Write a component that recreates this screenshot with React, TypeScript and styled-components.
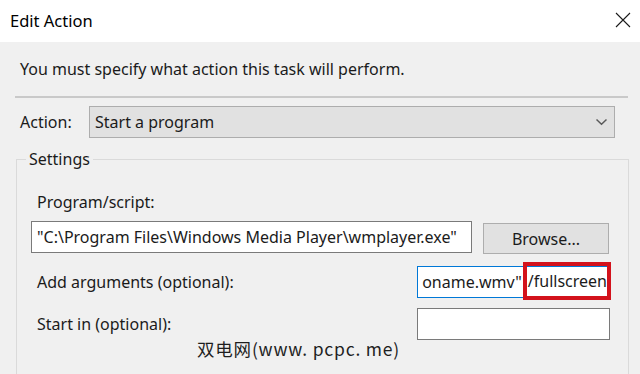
import * as React from "react";
import styled, { createGlobalStyle } from "styled-components";

const GlobalStyle = createGlobalStyle`
  html, body {
    margin: 0;
    padding: 0;
    background: #f0f0f0;
  }
  body {
    font-family: "Noto Sans", "Open Sans", sans-serif;
    color: #1b1b1b;
  }
`;

const Window = styled.div`
  position: relative;
  width: 640px;
  height: 374px;
  overflow: hidden;
  background: #f0f0f0;
  display: flex;
  flex-direction: column;
`;

const TitleBar = styled.div`
  height: 42px;
  flex: none;
  background: #ffffff;
  display: flex;
  align-items: center;
  justify-content: space-between;
  padding: 0 9px 0 10px;
  box-sizing: border-box;
`;

const Title = styled.div`
  font-size: 16.5px;
  color: #000;
  margin-top: -2px;
`;

const CloseButton = styled.div`
  width: 16px;
  height: 16px;
  margin-top: -3px;
  display: flex;
`;

const Body = styled.div`
  flex: 1;
  display: flex;
  flex-direction: column;
  padding: 0 11px 0 16px;
`;

const Intro = styled.div`
  height: 54px;
  display: flex;
  align-items: center;
  padding: 0 0 0 4px;
  font-size: 16px;
`;

const Separator = styled.div`
  height: 2px;
  margin: 0 1px 0 -1px;
  background: #c9c9c9;
`;

const ActionRow = styled.div`
  display: flex;
  align-items: center;
  margin-top: 8px;
  padding-left: 4px;
  padding-right: 14px;
  height: 32px;
`;

const ActionLabel = styled.div`
  width: 69px;
  font-size: 16px;
`;

const Select = styled.div`
  flex: 1;
  height: 32px;
  box-sizing: border-box;
  background: #e1e1e1;
  border: 1px solid #adadad;
  display: flex;
  align-items: center;
  justify-content: space-between;
  padding: 0 6px 0 5px;
  font-size: 16px;
`;

const Group = styled.fieldset`
  margin: 10px 0 0 0;
  padding: 21px 18px 0 20px;
  border: 1px solid #dadada;
  border-bottom: none;
  min-width: 0;
  flex: 1;
`;

const Legend = styled.legend`
  font-size: 16px;
  padding: 0 3px;
  margin-left: -11px;
  line-height: 22px;
`;

const FieldLabel = styled.div`
  font-size: 16px;
  line-height: 22px;
`;

const ProgramRow = styled.div`
  display: flex;
  align-items: flex-start;
  margin: 8px 0 0 -6px;
  gap: 11px;
`;

const TextBox = styled.div<{ $width?: number; $focused?: boolean }>`
  box-sizing: border-box;
  height: 32px;
  width: ${(p) => (p.$width ? `${p.$width}px` : "auto")};
  flex: ${(p) => (p.$width ? "none" : "1")};
  background: #ffffff;
  border: 1px solid ${(p) => (p.$focused ? "#0078d7" : "#7a7a7a")};
  display: flex;
  align-items: center;
  font-size: 16px;
  white-space: nowrap;
  padding: 0 3px 0 5px;
`;

const Button = styled.div`
  box-sizing: border-box;
  width: 126px;
  height: 31px;
  margin-top: 2px;
  background: #e1e1e1;
  border: 1px solid #adadad;
  display: flex;
  align-items: center;
  justify-content: center;
  font-size: 16px;
`;

const OptionRow = styled.div<{ $top: number }>`
  display: flex;
  align-items: center;
  justify-content: space-between;
  margin-top: ${(p) => p.$top}px;
`;

const ArgsBox = styled(TextBox)`
  padding: 0;
  justify-content: flex-end;
`;

const ArgsText = styled.div`
  flex: 1;
  display: flex;
  justify-content: flex-end;
  padding-right: 1px;
`;

const Highlight = styled.span`
  align-self: stretch;
  margin: -5px -2px -3px 0;
  border: 4px solid #d3121c;
  display: flex;
  align-items: center;
  padding: 0 0 0 1px;
`;

const Watermark = styled.div`
  position: absolute;
  left: 197px;
  top: 336px;
  font-family: "Noto Sans CJK SC", "DejaVu Sans", sans-serif;
  font-size: 17.5px;
  color: #1e1e1e;
  letter-spacing: 0.8px;
`;

export default function App() {
  return (
    <Window>
      <GlobalStyle />
      <TitleBar>
        <Title>Edit Action</Title>
        <CloseButton>
          <svg width="16" height="16" viewBox="0 0 16 16">
            <path d="M1 1 L15 15 M15 1 L1 15" stroke="#1a1a1a" strokeWidth="1.1" fill="none" />
          </svg>
        </CloseButton>
      </TitleBar>
      <Body>
        <Intro>You must specify what action this task will perform.</Intro>
        <Separator />
        <ActionRow>
          <ActionLabel>Action:</ActionLabel>
          <Select>
            <span>Start a program</span>
            <svg width="13" height="8" viewBox="0 0 13 8">
              <polyline points="1.5,1.5 6.5,6.2 11.5,1.5" stroke="#5a5a5a" strokeWidth="1.5" fill="none" />
            </svg>
          </Select>
        </ActionRow>
        <Group>
          <Legend>Settings</Legend>
          <FieldLabel>Program/script:</FieldLabel>
          <ProgramRow>
            <TextBox $width={441}>"C:\Program Files\Windows Media Player\wmplayer.exe"</TextBox>
            <Button>Browse...</Button>
          </ProgramRow>
          <OptionRow $top={12}>
            <FieldLabel>Add arguments (optional):</FieldLabel>
            <ArgsBox $width={193} $focused>
              <ArgsText>oname.wmv"</ArgsText>
              <Highlight>/fullscreen</Highlight>
            </ArgsBox>
          </OptionRow>
          <OptionRow $top={10}>
            <FieldLabel>Start in (optional):</FieldLabel>
            <TextBox $width={193} />
          </OptionRow>
        </Group>
      </Body>
      <Watermark>双电网(www. pcpc. me)</Watermark>
    </Window>
  );
}
